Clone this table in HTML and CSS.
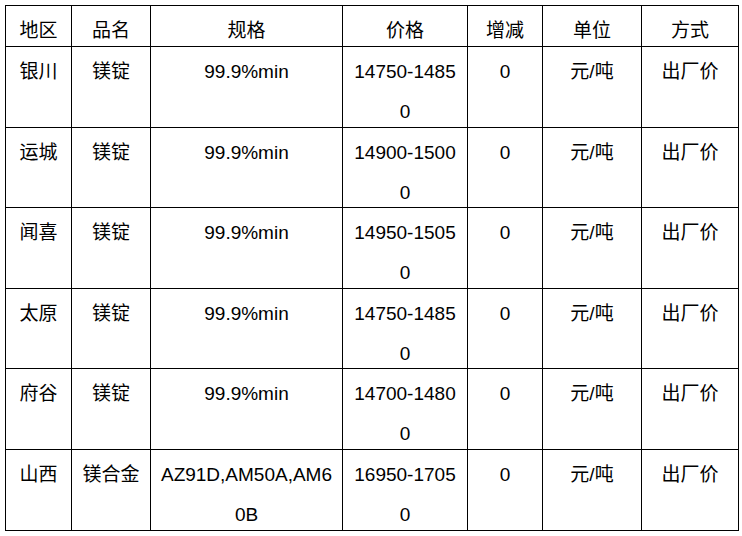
FILE: index.html
```html
<!DOCTYPE html>
<html lang="zh-CN">
<head>
<meta charset="utf-8">
<title>镁锭价格</title>
<link rel="stylesheet" href="styles.css">
</head>
<body>
<div class="grid">
  <div class="c h">地区</div><div class="c h">品名</div><div class="c h">规格</div><div class="c h">价格</div><div class="c h">增减</div><div class="c h">单位</div><div class="c h">方式</div>

  <div class="c r1">银川</div><div class="c r1">镁锭</div><div class="c r1">99.9%min</div><div class="c r1">14750-14850</div><div class="c r1">0</div><div class="c r1">元/吨</div><div class="c r1">出厂价</div>

  <div class="c r2">运城</div><div class="c r2">镁锭</div><div class="c r2">99.9%min</div><div class="c r2">14900-15000</div><div class="c r2">0</div><div class="c r2">元/吨</div><div class="c r2">出厂价</div>

  <div class="c r1">闻喜</div><div class="c r1">镁锭</div><div class="c r1">99.9%min</div><div class="c r1">14950-15050</div><div class="c r1">0</div><div class="c r1">元/吨</div><div class="c r1">出厂价</div>

  <div class="c r2">太原</div><div class="c r2">镁锭</div><div class="c r2">99.9%min</div><div class="c r2">14750-14850</div><div class="c r2">0</div><div class="c r2">元/吨</div><div class="c r2">出厂价</div>

  <div class="c r1">府谷</div><div class="c r1">镁锭</div><div class="c r1">99.9%min</div><div class="c r1">14700-14800</div><div class="c r1">0</div><div class="c r1">元/吨</div><div class="c r1">出厂价</div>

  <div class="c r1">山西</div><div class="c r1">镁合金</div><div class="c r1">AZ91D,AM50A,AM60B</div><div class="c r1">16950-17050</div><div class="c r1">0</div><div class="c r1">元/吨</div><div class="c r1">出厂价</div>
</div>
</body>
</html>
```

FILE: styles.css
```css
html, body {
  margin: 0;
  padding: 0;
  background: #ffffff;
}

.grid {
  margin: 5px 0 0 5px;
  display: grid;
  grid-template-columns: 66px 79px 192px 125px 75px 99px 97px;
  width: max-content;
  border-left: 1px solid #000;
  border-top: 1px solid #000;
  font-family: "Liberation Sans", Arial, "Noto Sans CJK SC", sans-serif;
  font-size: 19px;
  color: #000;
}

.c {
  box-sizing: border-box;
  border-right: 1px solid #000;
  border-bottom: 1px solid #000;
  text-align: center;
  line-height: 40px;
  padding: 5px 8px 0 8px;
  word-break: break-all;
  overflow: hidden;
}

.h {
  height: 41px;
  padding-top: 5px;
}

.r1 {
  height: 81px;
}

.r2 {
  height: 80px;
}
```
